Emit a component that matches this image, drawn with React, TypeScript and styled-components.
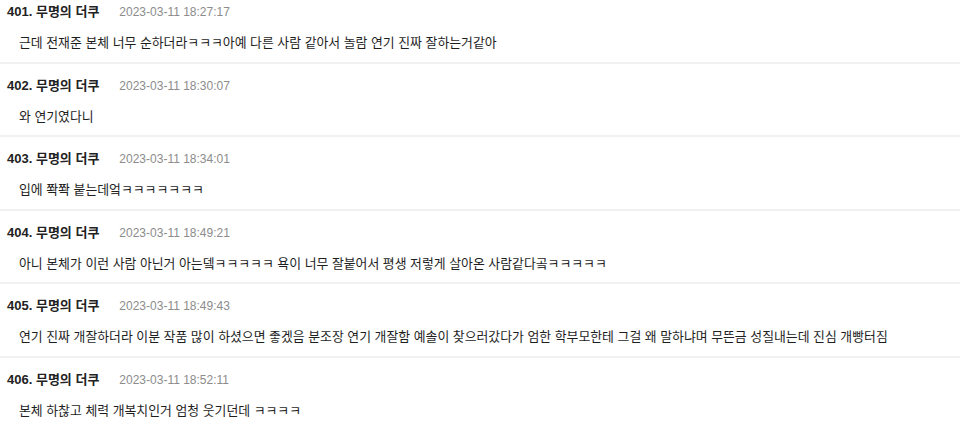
import React from "react";
import styled, { createGlobalStyle } from "styled-components";

const Global = createGlobalStyle`
  html, body { margin: 0; padding: 0; background: #fff; }
  body { font-family: "Liberation Sans", "Noto Sans CJK KR", sans-serif; }
`;

const List = styled.ul`
  list-style: none;
  margin: 0;
  padding: 0;
  width: 960px;
`;

const Item = styled.li`
  padding: 14px 7px 8.6px;
  border-bottom: 2px solid #f1f1f1;
  &:first-child { padding-top: 4px; }
`;

const Header = styled.div`
  display: flex;
  align-items: baseline;
  gap: 20px;
  height: 16px;
  line-height: 16px;
`;

const Author = styled.span`
  font-size: 13px;
  font-weight: 700;
  color: #222;
`;

const DateText = styled.span`
  font-size: 12px;
  color: #8c8c8c;
`;

const Message = styled.p`
  margin: 12px 0 0 12px;
  font-size: 12.88px;
  line-height: 21px;
  color: #1e1e1e;
`;

const comments = [
  { no: 401, date: "2023-03-11 18:27:17", text: "근데 전재준 본체 너무 순하더라ㅋㅋㅋ아예 다른 사람 같아서 놀람 연기 진짜 잘하는거같아" },
  { no: 402, date: "2023-03-11 18:30:07", text: "와 연기였다니" },
  { no: 403, date: "2023-03-11 18:34:01", text: "입에 쫙쫙 붙는데엌ㅋㅋㅋㅋㅋㅋㅋ" },
  { no: 404, date: "2023-03-11 18:49:21", text: "아니 본체가 이런 사람 아닌거 아는뎈ㅋㅋㅋㅋㅋ 욕이 너무 잘붙어서 평생 저렇게 살아온 사람같다곸ㅋㅋㅋㅋㅋ" },
  { no: 405, date: "2023-03-11 18:49:43", text: "연기 진짜 개잘하더라 이분 작품 많이 하셨으면 좋겠음 분조장 연기 개잘함 예솔이 찾으러갔다가 엄한 학부모한테 그걸 왜 말하냐며 무뜬금 성질내는데 진심 개빵터짐" },
  { no: 406, date: "2023-03-11 18:52:11", text: "본체 하찮고 체력 개복치인거 엄청 웃기던데 ㅋㅋㅋㅋ" },
];

export default function App() {
  return (
    <>
      <Global />
      <List>
        {comments.map((c) => (
          <Item key={c.no}>
            <Header>
              <Author>{c.no}. 무명의 더쿠</Author>
              <DateText>{c.date}</DateText>
            </Header>
            <Message>{c.text}</Message>
          </Item>
        ))}
      </List>
    </>
  );
}
